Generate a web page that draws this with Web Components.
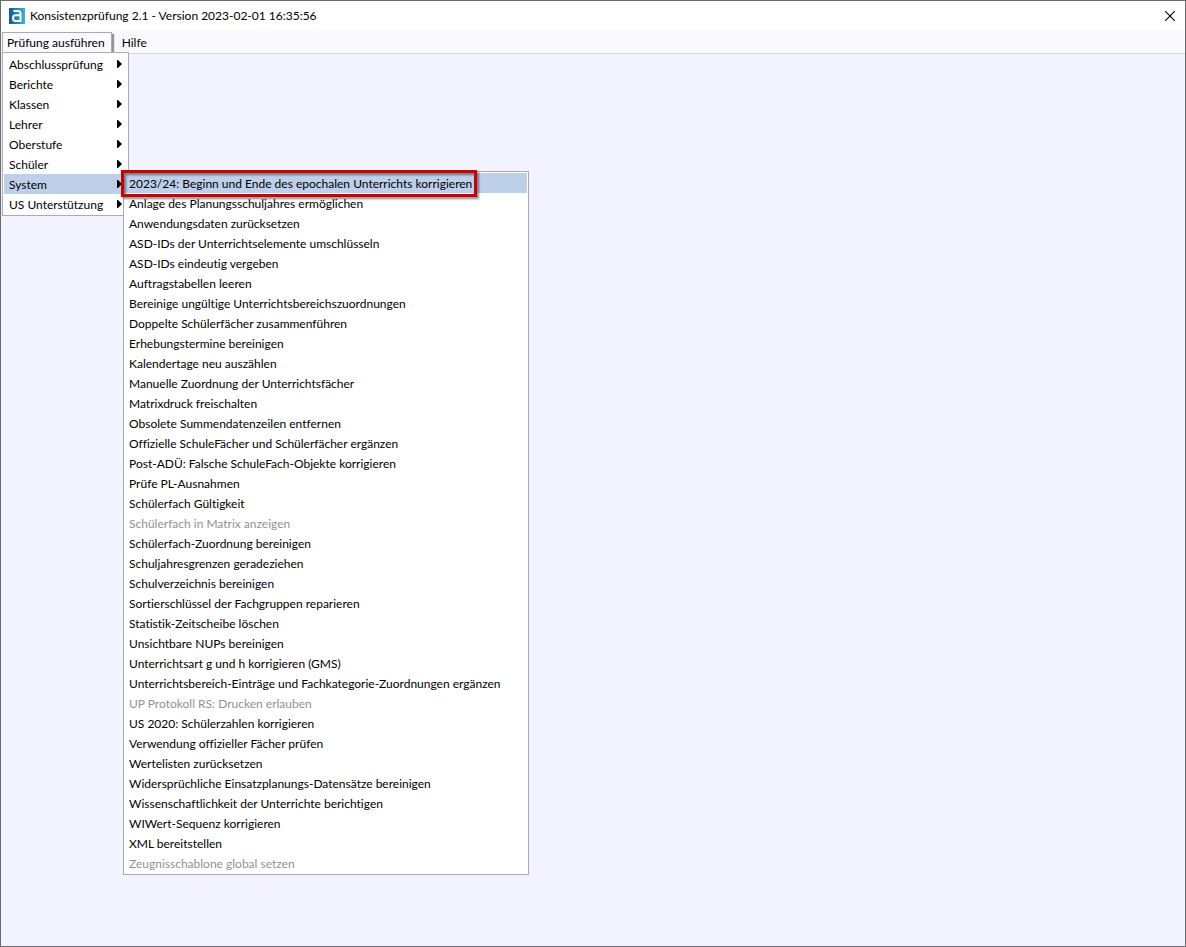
<!DOCTYPE html>
<html lang="de">
<head>
<meta charset="utf-8">
<title>Konsistenzprüfung 2.1</title>
<style>
  html, body { height: 100%; margin: 0; }
  body {
    --c-desk: #f3f3ff;
    --c-bar: #f9f9fe;
    --c-line: #d6d6e6;
    --c-frame: #acaaba;
    --c-select: #bdcfe9;
    --c-disabled: #929292;
    --c-mark: #cc0000;
    font: 12px/20px Lato, "Noto Sans", sans-serif;
    font-variant-ligatures: none;
    color: #000;
  }
</style>
</head>
<body>
<app-window>
  <app-logo slot="icon"></app-logo>
  <span slot="title">Konsistenzprüfung 2.1 - Version 2023-02-01 16:35:56</span>
  <menu-bar slot="menu"></menu-bar>
</app-window>

<script>
const MENU = [
  { label: 'Prüfung ausführen', open: true, width: '127px', items: [
    { label: 'Abschlussprüfung', more: true },
    { label: 'Berichte', more: true },
    { label: 'Klassen', more: true },
    { label: 'Lehrer', more: true },
    { label: 'Oberstufe', more: true },
    { label: 'Schüler', more: true },
    { label: 'System', more: true, active: true, width: '406px', items: [
      { label: '2023/24: Beginn und Ende des epochalen Unterrichts korrigieren', active: true, marked: true },
      { label: 'Anlage des Planungsschuljahres ermöglichen' },
      { label: 'Anwendungsdaten zurücksetzen' },
      { label: 'ASD-IDs der Unterrichtselemente umschlüsseln' },
      { label: 'ASD-IDs eindeutig vergeben' },
      { label: 'Auftragstabellen leeren' },
      { label: 'Bereinige ungültige Unterrichtsbereichszuordnungen' },
      { label: 'Doppelte Schülerfächer zusammenführen' },
      { label: 'Erhebungstermine bereinigen' },
      { label: 'Kalendertage neu auszählen' },
      { label: 'Manuelle Zuordnung der Unterrichtsfächer' },
      { label: 'Matrixdruck freischalten' },
      { label: 'Obsolete Summendatenzeilen entfernen' },
      { label: 'Offizielle SchuleFächer und Schülerfächer ergänzen' },
      { label: 'Post-ADÜ: Falsche SchuleFach-Objekte korrigieren' },
      { label: 'Prüfe PL-Ausnahmen' },
      { label: 'Schülerfach Gültigkeit' },
      { label: 'Schülerfach in Matrix anzeigen', disabled: true },
      { label: 'Schülerfach-Zuordnung bereinigen' },
      { label: 'Schuljahresgrenzen geradeziehen' },
      { label: 'Schulverzeichnis bereinigen' },
      { label: 'Sortierschlüssel der Fachgruppen reparieren' },
      { label: 'Statistik-Zeitscheibe löschen' },
      { label: 'Unsichtbare NUPs bereinigen' },
      { label: 'Unterrichtsart g und h korrigieren (GMS)' },
      { label: 'Unterrichtsbereich-Einträge und Fachkategorie-Zuordnungen ergänzen' },
      { label: 'UP Protokoll RS: Drucken erlauben', disabled: true },
      { label: 'US 2020: Schülerzahlen korrigieren' },
      { label: 'Verwendung offizieller Fächer prüfen' },
      { label: 'Wertelisten zurücksetzen' },
      { label: 'Widersprüchliche Einsatzplanungs-Datensätze bereinigen' },
      { label: 'Wissenschaftlichkeit der Unterrichte berichtigen' },
      { label: 'WIWert-Sequenz korrigieren' },
      { label: 'XML bereitstellen' },
      { label: 'Zeugnisschablone global setzen', disabled: true },
    ] },
    { label: 'US Unterstützung', more: true },
  ] },
  { label: 'Hilfe' },
];

/* <app-logo> — the blue tile with a white lowercase a */
class AppLogo extends HTMLElement {
  constructor() {
    super();
    this.attachShadow({ mode: 'open' }).innerHTML = `
      <style>
        :host { display: block; width: 16px; height: 16px; }
        svg { display: block; }
      </style>
      <svg width="16" height="16" viewBox="0 0 16 16" aria-hidden="true">
        <defs>
          <linearGradient id="g" x1="0" y1="0" x2="1" y2="0">
            <stop offset="0" stop-color="#135c93"/>
            <stop offset=".5" stop-color="#2384b8"/>
            <stop offset="1" stop-color="#3cb4df"/>
          </linearGradient>
        </defs>
        <rect width="16" height="16" fill="url(#g)"/>
        <path d="M4.500 3H9Q11.500 3 11.500 5.500V13H6.500Q4 13 4 10.200Q4 7.300 6.500 7.300H11"
          fill="none" stroke="#fff" stroke-width="2"/>
      </svg>
    `;
  }
}

/*
 * <app-window> — framed window with title bar and close button.
 * Slots: icon, title, menu, default (client area)
 */
class AppWindow extends HTMLElement {
  constructor() {
    super();
    this.attachShadow({ mode: 'open' }).innerHTML = `
      <style>
        :host {
          display: flex; flex-direction: column;
          box-sizing: border-box;
          min-height: 100%;
          border: 1px solid #6b6b6b;
          background: var(--c-desk);
        }
        header {
          display: flex; align-items: center;
          gap: 5px;
          height: 30px;
          padding-left: 8px;
          background: #fff;
        }
        .title { flex: 1; }
        button {
          display: flex; align-items: center; justify-content: center;
          width: 30px; height: 30px;
          padding: 0; border: 0;
          background: none;
        }
        main { flex: 1; }
      </style>
      <header>
        <slot name="icon"></slot>
        <div class="title"><slot name="title"></slot></div>
        <button type="button" aria-label="Schließen">
          <svg width="10" height="10" viewBox="0 0 10 10" aria-hidden="true">
            <path d="M0 0L10 10M10 0L0 10" stroke="#000" stroke-width="1.100"/>
          </svg>
        </button>
      </header>
      <slot name="menu"></slot>
      <main><slot></slot></main>
    `;
  }
}

/* <menu-list> — bordered popup that stacks its items; nested ones have no left gap */
class MenuList extends HTMLElement {
  constructor() {
    super();
    this.attachShadow({ mode: 'open' }).innerHTML = `
      <style>
        :host {
          display: flex; flex-direction: column;
          box-sizing: border-box;
          width: var(--menu-width, max-content);
          padding: 1px;
          border: 1px solid var(--c-frame);
          background: #fff;
        }
        :host([nested]) { padding-left: 0; }
      </style>
      <slot></slot>
    `;
  }
}

/*
 * <menu-item> — one row of a popup.
 * Attributes: active, disabled, more (arrow), marked (red frame)
 * Slots: default (label), submenu
 */
class MenuItem extends HTMLElement {
  constructor() {
    super();
    this.attachShadow({ mode: 'open' });
  }

  connectedCallback() {
    const disabled = this.hasAttribute('disabled') ? 'disabled' : '';
    const arrow = this.hasAttribute('more')
      ? '<svg width="5" height="8" viewBox="0 0 5 8" aria-hidden="true"><path d="M0 0H1L5 4L1 8H0Z"/></svg>'
      : '';
    this.shadowRoot.innerHTML = `
      <style>
        :host { display: block; position: relative; }
        button {
          display: flex; align-items: center; justify-content: space-between;
          width: 100%; height: 20px;
          padding: 0 5px; border: 0;
          background: none;
          color: inherit; font: inherit;
          text-align: left; white-space: nowrap;
        }
        button:disabled { color: var(--c-disabled); }
        .label { padding-top: 2px; }
        :host([active]) button { background: var(--c-select); }
        :host([marked]) .label { position: relative; }
        :host([marked]) .label::after {
          content: "";
          position: absolute; inset: -2px -5px -3px -8px;
          border: 3px solid var(--c-mark);
          filter: drop-shadow(2px 2px 1px rgba(0, 0, 0, .45));
        }
        ::slotted([slot="submenu"]) {
          position: absolute;
          left: calc(100% - 4px); top: -3px;
          z-index: 1;
        }
      </style>
      <button type="button" role="menuitem" ${disabled}>
        <span class="label"><slot></slot></span>${arrow}
      </button>
      <slot name="submenu"></slot>
    `;
  }
}

/* <menu-entry> — top level entry of the menu bar */
class MenuEntry extends HTMLElement {
  constructor() {
    super();
    this.attachShadow({ mode: 'open' }).innerHTML = `
      <style>
        :host { display: block; position: relative; }
        button {
          box-sizing: border-box;
          height: 21px;
          padding: 0 4px;
          border: 1px solid transparent; border-bottom: 0;
          background: none;
          color: inherit; font: inherit;
          white-space: nowrap;
        }
        :host([open]) button {
          padding-right: 6px;
          border-color: var(--c-frame);
          background: var(--c-bar);
          box-shadow: 2px 2px 1px rgba(0, 0, 0, .4);
        }
        ::slotted([slot="submenu"]) {
          position: absolute;
          left: 0; top: 20px;
          z-index: 1;
        }
      </style>
      <button type="button"><slot></slot></button>
      <slot name="submenu"></slot>
    `;
  }
}

/* <menu-bar> — builds the entries and their popups from MENU */
class MenuBar extends HTMLElement {
  constructor() {
    super();
    this.attachShadow({ mode: 'open' }).innerHTML = `
      <style>
        :host {
          display: flex; align-items: flex-start;
          gap: 5px;
          box-sizing: border-box;
          height: 23px;
          padding: 1px 1px 0;
          border-bottom: 1px solid var(--c-line);
          background: var(--c-bar);
        }
      </style>
    `;
    MENU.forEach((entry) => this.shadowRoot.append(this.build('menu-entry', entry)));
  }

  build(tag, data) {
    const el = document.createElement(tag);
    el.append(data.label);
    ['open', 'active', 'disabled', 'more', 'marked'].forEach((name) => {
      if (data[name]) el.setAttribute(name, '');
    });
    if (data.items) {
      const list = document.createElement('menu-list');
      list.slot = 'submenu';
      list.toggleAttribute('nested', tag === 'menu-item');
      list.style.setProperty('--menu-width', data.width);
      data.items.forEach((item) => list.append(this.build('menu-item', item)));
      el.append(list);
    }
    return el;
  }
}

customElements.define('app-logo', AppLogo);
customElements.define('app-window', AppWindow);
customElements.define('menu-list', MenuList);
customElements.define('menu-item', MenuItem);
customElements.define('menu-entry', MenuEntry);
customElements.define('menu-bar', MenuBar);
</script>
</body>
</html>
